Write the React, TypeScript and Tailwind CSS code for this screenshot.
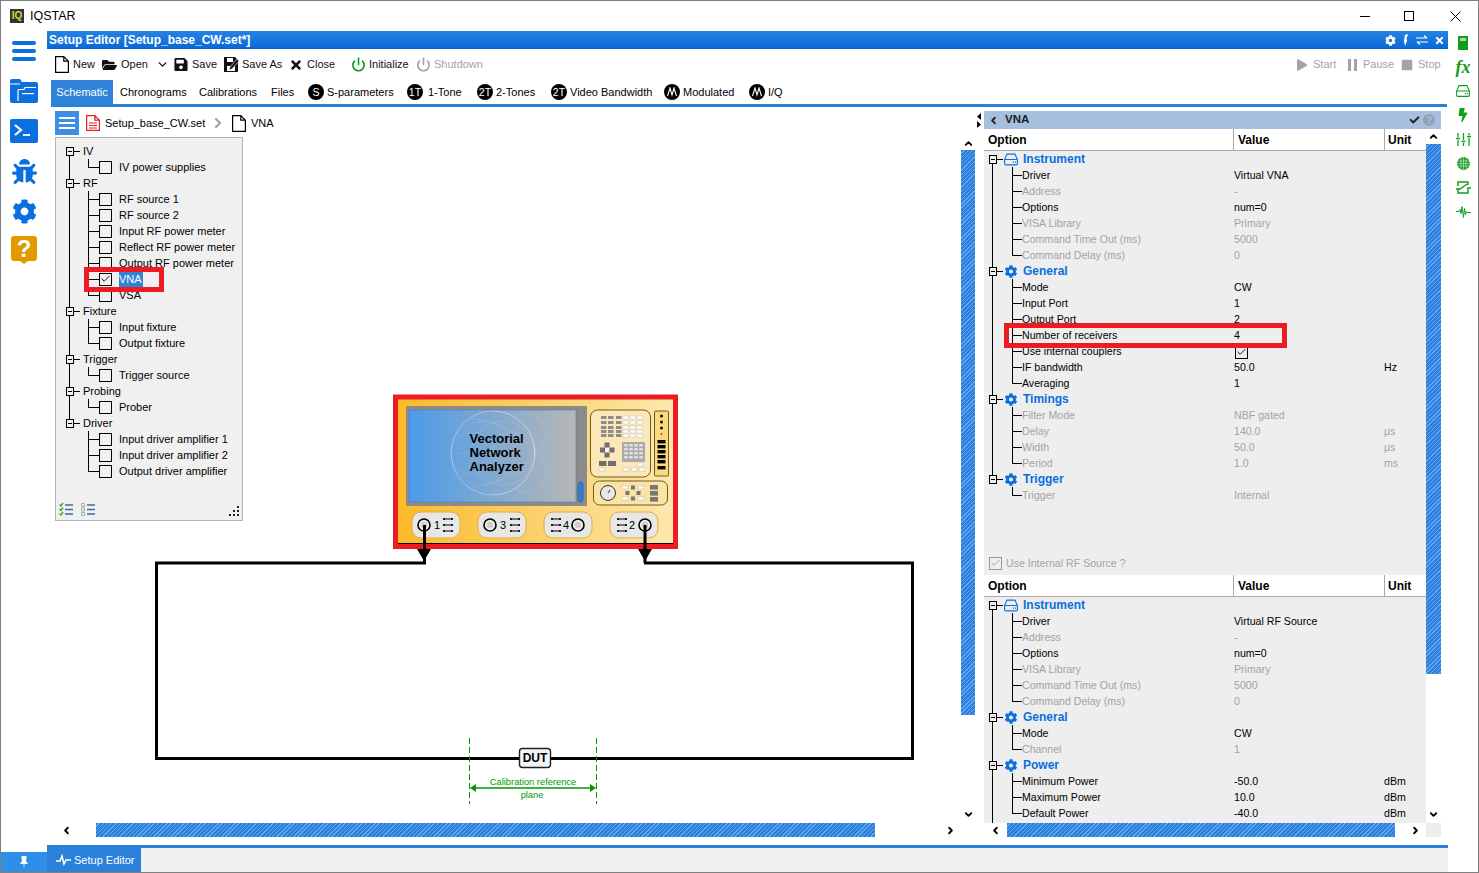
import { Check, ChevronDown, ChevronLeft, ChevronRight, ChevronUp, Power } from "lucide-react"
import { FaBug, FaCog, FaPlay, FaStop, FaBolt, FaSave, FaFolderOpen, FaTimes, FaCheck, FaQuestionCircle } from "react-icons/fa"

type Row = { label: string; value?: string; unit?: string; off?: boolean; check?: boolean }
type Group = { label: string; icon: "hdd" | "gear"; rows: Row[] }

const leftTree = [
  { label: "IV", items: ["IV power supplies"] },
  { label: "RF", items: ["RF source 1", "RF source 2", "Input RF power meter", "Reflect RF power meter", "Output RF power meter", "VNA", "VSA"] },
  { label: "Fixture", items: ["Input fixture", "Output fixture"] },
  { label: "Trigger", items: ["Trigger source"] },
  { label: "Probing", items: ["Prober"] },
  { label: "Driver", items: ["Input driver amplifier 1", "Input driver amplifier 2", "Output driver amplifier"] },
]

const vnaGroups: Group[] = [
  {
    label: "Instrument",
    icon: "hdd",
    rows: [
      { label: "Driver", value: "Virtual VNA" },
      { label: "Address", value: "-", off: true },
      { label: "Options", value: "num=0" },
      { label: "VISA Library", value: "Primary", off: true },
      { label: "Command Time Out (ms)", value: "5000", off: true },
      { label: "Command Delay (ms)", value: "0", off: true },
    ],
  },
  {
    label: "General",
    icon: "gear",
    rows: [
      { label: "Mode", value: "CW" },
      { label: "Input Port", value: "1" },
      { label: "Output Port", value: "2" },
      { label: "Number of receivers", value: "4" },
      { label: "Use internal couplers", check: true },
      { label: "IF bandwidth", value: "50.0", unit: "Hz" },
      { label: "Averaging", value: "1" },
    ],
  },
  {
    label: "Timings",
    icon: "gear",
    rows: [
      { label: "Filter Mode", value: "NBF gated", off: true },
      { label: "Delay", value: "140.0", unit: "µs", off: true },
      { label: "Width", value: "50.0", unit: "µs", off: true },
      { label: "Period", value: "1.0", unit: "ms", off: true },
    ],
  },
  { label: "Trigger", icon: "gear", rows: [{ label: "Trigger", value: "Internal", off: true }] },
]

const sourceGroups: Group[] = [
  {
    label: "Instrument",
    icon: "hdd",
    rows: [
      { label: "Driver", value: "Virtual RF Source" },
      { label: "Address", value: "-", off: true },
      { label: "Options", value: "num=0" },
      { label: "VISA Library", value: "Primary", off: true },
      { label: "Command Time Out (ms)", value: "5000", off: true },
      { label: "Command Delay (ms)", value: "0", off: true },
    ],
  },
  {
    label: "General",
    icon: "gear",
    rows: [
      { label: "Mode", value: "CW" },
      { label: "Channel", value: "1", off: true },
    ],
  },
  {
    label: "Power",
    icon: "gear",
    rows: [
      { label: "Minimum Power", value: "-50.0", unit: "dBm" },
      { label: "Maximum Power", value: "10.0", unit: "dBm" },
      { label: "Default Power", value: "-40.0", unit: "dBm" },
    ],
  },
]

const tabs = [
  { label: "Chronograms", cls: "ml-[7px] w-[79px]" },
  { label: "Calibrations", cls: "w-[72px]" },
  { label: "Files", cls: "w-[37px]" },
  { label: "S-parameters", badge: "S", cls: "w-[99px]" },
  { label: "1-Tone", badge: "1T", cls: "w-[70px]" },
  { label: "2-Tones", badge: "2T", cls: "w-[74px]" },
  { label: "Video Bandwidth", badge: "2T", cls: "w-[113px]" },
  { label: "Modulated", wave: true, cls: "w-[85px]" },
  { label: "I/Q", wave: true, cls: "w-[50px]" },
]

const hatch = "bg-[repeating-linear-gradient(135deg,#2a80dc_0px,#2a80dc_2px,#63a8ee_2px,#63a8ee_3px)]"

function TreeBranch({ width, branchX, mainX, more, lastChild }: { width: number; branchX: number; mainX: number; more: boolean; lastChild: boolean }) {
  return (
    <svg width={width} height={16} shapeRendering="crispEdges" className="shrink-0">
      {more && <path d={`M${mainX} 0V16`} stroke="#000" />}
      <path d={`M${branchX} 0V${lastChild ? 8.5 : 16}M${branchX} 8.5H${width}`} stroke="#000" fill="none" />
    </svg>
  )
}

function TreeNode({ width, lineEnd, mainX, first, more }: { width: number; lineEnd: number; mainX: number; first: boolean; more: boolean }) {
  const l = mainX - 3.5
  return (
    <svg width={width} height={16} shapeRendering="crispEdges" className="shrink-0">
      {!first && <path d={`M${mainX} 0V4.5`} stroke="#000" />}
      {more && <path d={`M${mainX} 12.5V16`} stroke="#000" />}
      <rect x={l} y={4.5} width={7} height={8} fill="none" stroke="#000" />
      <path d={`M${l + 2} 8.5H${l + 6}M${l + 7} 8.5H${lineEnd}`} stroke="#000" />
    </svg>
  )
}

function Box({ checked, off }: { checked?: boolean; off?: boolean }) {
  return (
    <span className={`flex h-[13px] w-[13px] shrink-0 items-center justify-center border ${off ? "border-[#999] text-[#999]" : "border-black text-black"}`}>
      {checked && <Check size={12} strokeWidth={2} />}
    </span>
  )
}

function HddIcon({ className }: { className: string }) {
  return (
    <svg viewBox="0 0 14 12" className={className} fill="none" stroke="currentColor" strokeWidth="1.1">
      <path d="M3 .6h8l2.4 5.4v4a1.4 1.4 0 0 1-1.4 1.4H2A1.4 1.4 0 0 1 .6 10V6zM.6 6h12.8" />
      <path d="M9 8.7h1.2M11 8.7h1" strokeWidth="1.2" />
    </svg>
  )
}

function OptionTable({ groups, clipped }: { groups: Group[]; clipped?: boolean }) {
  return (
    <div className="flex min-h-0 flex-1 flex-col">
      <div className="flex h-[22px] shrink-0 items-center border-b border-[#a9a9a9] bg-white text-[12px] font-bold text-black">
        <div className="flex h-full w-[250px] items-center border-r border-[#a9a9a9] pl-[4px]">Option</div>
        <div className="flex h-full w-[151px] items-center border-r border-[#a9a9a9] pl-[4px]">Value</div>
        <div className="pl-[3px]">Unit</div>
      </div>
      <div className="min-h-0 flex-1 overflow-hidden">
        {groups.map((group, g) => {
          const more = clipped || g < groups.length - 1
          return (
            <div key={group.label}>
              <div className="flex h-[16px] items-center">
                <TreeNode width={20} lineEnd={19} mainX={8.5} first={g === 0} more={more} />
                {group.icon === "hdd" ? (
                  <HddIcon className="h-[13px] w-[14px] text-[#0b6fe0]" />
                ) : (
                  <FaCog className="h-[13px] w-[14px] text-[#0b6fe0]" />
                )}
                <span className="ml-[5px] text-[12px] font-bold text-[#0b6fe0]">{group.label}</span>
              </div>
              {group.rows.map((row, r) => (
                <div key={row.label} className={`flex h-[16px] items-center text-[10.6px] ${row.off ? "text-[#a3a3a3]" : "text-black"}`}>
                  <div className="flex w-[250px] items-center whitespace-nowrap">
                    <TreeBranch width={38} mainX={8.5} branchX={28.5} more={more} lastChild={r === group.rows.length - 1} />
                    <span>{row.label}</span>
                  </div>
                  <div className="flex w-[150px] items-center whitespace-nowrap">
                    {row.check ? (
                      <span className="ml-[1px] mt-[2px]">
                        <Box checked />
                      </span>
                    ) : (
                      row.value
                    )}
                  </div>
                  <div>{row.unit}</div>
                </div>
              ))}
            </div>
          )
        })}
        {clipped && <TreeBranch width={38} mainX={8.5} branchX={-5} more lastChild />}
      </div>
    </div>
  )
}

function Badge({ text, wave }: { text?: string; wave?: boolean }) {
  return (
    <span className={`flex h-[16px] w-[16px] shrink-0 items-center justify-center rounded-full bg-black text-[10.5px] text-white ${text === "1T" ? "mr-[5px]" : "mr-[3px]"}`}>
      {wave ? (
        <svg width="10" height="10" viewBox="0 0 10 10" fill="none" stroke="#fff" strokeWidth="1.1">
          <path d="M.5 9L3 1l2 7 2-7 2.5 8" />
        </svg>
      ) : (
        text
      )}
    </span>
  )
}

function ToolIcon({ kind }: { kind: string }) {
  if (kind === "new")
    return (
      <svg width="14" height="17" viewBox="0 0 14 17" fill="none" stroke="#000" strokeWidth="1.2" className="shrink-0">
        <path d="M.6.6h8.2l4.6 4.6v11.2H.6zM8.8.6v4.6h4.6" />
      </svg>
    )
  if (kind === "saveas")
    return (
      <svg width="15" height="15" viewBox="0 0 15 15" className="shrink-0">
        <path d="M0 0h11l3 3v11a1 1 0 0 1-1 1H0z" fill="#111" />
        <path d="M3 1h6v4H3zM3 9h8v5H3z" fill="#fff" />
        <path d="M5 13l1-3 7-8 2 2-7 8z" fill="#111" stroke="#fff" strokeWidth=".6" />
      </svg>
    )
  return null
}

function Sidebar() {
  return (
    <div className="flex w-[46px] shrink-0 flex-col items-center text-[#0b6fe0]">
      <div className="flex h-[40px] items-center justify-center">
        <div className="flex w-[24px] flex-col gap-[4px]">
          <div className="h-[4px] rounded-full bg-[#0b6fe0]" />
          <div className="h-[4px] rounded-full bg-[#0b6fe0]" />
          <div className="h-[4px] rounded-full bg-[#0b6fe0]" />
        </div>
      </div>
      <div className="flex h-[40px] items-center justify-center">
        <svg width="28" height="24" viewBox="0 0 28 24">
          <path d="M2 0h8l2 3h14a2 2 0 0 1 2 2v17a2 2 0 0 1-2 2H2a2 2 0 0 1-2-2V2a2 2 0 0 1 2-2z" fill="#0b6fe0" />
          <path d="M0 5h10M8 22V11.500a1 1 0 0 1 1-1h5l1-2h11" fill="none" stroke="#fff" strokeWidth="1.2" />
          <path d="M12 14h12v1.200H12z" fill="#fff" />
        </svg>
      </div>
      <div className="flex h-[40px] items-center justify-center">
        <svg width="28" height="24" viewBox="0 0 28 24">
          <rect width="28" height="24" rx="2" fill="#0b6fe0" />
          <path d="M5 6l6 5-6 5" fill="none" stroke="#fff" strokeWidth="2.2" />
          <path d="M13 16h7" stroke="#fff" strokeWidth="2" />
        </svg>
      </div>
      <div className="flex h-[40px] items-center justify-center">
        <FaBug className="h-[25px] w-[25px]" />
      </div>
      <div className="flex h-[40px] items-center justify-center">
        <FaCog className="h-[25px] w-[25px]" />
      </div>
      <div className="flex h-[38px] flex-col items-center justify-center">
        <div className="flex h-[25px] w-[26px] items-center justify-center rounded-[3px] bg-[#e09a00] text-[24px] font-bold text-white">?</div>
        <svg width="8" height="3" viewBox="0 0 8 3" fill="#e09a00">
          <path d="M0 0h8L4 3z" />
        </svg>
      </div>
    </div>
  )
}

function RightBar() {
  return (
    <div className="flex w-[30px] shrink-0 flex-col items-center text-[#0f9d1c]">
      <div className="flex h-[24px] items-center">
        <svg width="10" height="14" viewBox="0 0 10 14">
          <rect width="10" height="14" fill="#0f9d1c" />
          <rect x="2" y="2" width="6" height="3" fill="#a6dca6" />
        </svg>
      </div>
      <div className="flex h-[24px] items-center font-['Liberation_Serif',serif] text-[18px] font-bold italic leading-none">fx</div>
      <div className="flex h-[24px] items-center">
        <HddIcon className="h-[12px] w-[14px]" />
      </div>
      <div className="flex h-[24px] items-center">
        <FaBolt className="h-[14px] w-[12px]" />
      </div>
      <div className="flex h-[24px] items-center">
        <svg width="15" height="13" viewBox="0 0 15 13" fill="none" stroke="currentColor" strokeWidth="1.3">
          <path d="M2 0v4M2 7v6M7.500 0v7M7.500 10v3M13 0v2M13 5v8M0 5.500h4M5.500 8.500h4M11 3.500h4" />
        </svg>
      </div>
      <div className="flex h-[24px] items-center">
        <svg width="13" height="13" viewBox="0 0 13 13">
          <circle cx="6.5" cy="6.5" r="6.5" fill="currentColor" />
          <path d="M4 0v13M6.500 0v13M9 0v13M0 4h13M0 6.500h13M0 9h13" stroke="#fff" strokeWidth=".5" />
        </svg>
      </div>
      <div className="flex h-[24px] items-center">
        <svg width="15" height="13" viewBox="0 0 15 13" fill="none" stroke="currentColor" strokeWidth="1.4">
          <path d="M2 5V1h10v3M12 8v4H2V8M0 8h4l7-5M11 7h4" />
        </svg>
      </div>
      <div className="flex h-[24px] items-center">
        <svg width="15" height="13" viewBox="0 0 15 13" fill="none" stroke="currentColor" strokeWidth="1">
          <path d="M0 6.500h3l1-2 1 4 1-7 1.500 11 1-9 1 6 1-3 .8 1H15" />
        </svg>
      </div>
    </div>
  )
}

function Smith() {
  const cx = 493
  const cy = 453
  return (
    <g fill="none" stroke="#fff" strokeOpacity=".2" strokeWidth=".5">
      <circle cx={cx} cy={cy} r={42} strokeOpacity=".4" strokeWidth=".8" />
      <circle cx={cx + 10} cy={cy} r={32} />
      <circle cx={cx + 21} cy={cy} r={21} />
      <circle cx={cx + 31} cy={cy} r={11} />
      <circle cx={cx - 10} cy={cy} r={32} />
      <circle cx={cx - 21} cy={cy} r={21} />
      <path d={`M${cx - 42} ${cy}H${cx + 42}`} />
      <path d={`M${cx + 42} ${cy}A42 42 0 0 0 ${cx} ${cy - 42}M${cx + 42} ${cy}A42 42 0 0 1 ${cx} ${cy + 42}`} />
      <path d={`M${cx + 42} ${cy}A84 84 0 0 0 ${cx - 25} ${cy - 34}M${cx + 42} ${cy}A84 84 0 0 1 ${cx - 25} ${cy + 34}`} />
      <path d={`M${cx + 42} ${cy}A21 21 0 0 0 ${cx + 22} ${cy - 37}M${cx + 42} ${cy}A21 21 0 0 1 ${cx + 22} ${cy + 37}`} />
    </g>
  )
}

function Pill({ x, port, num, numX, linesX }: { x: number; port: number; num: string; numX: number; linesX: number }) {
  return (
    <g>
      <rect x={x} y={512} width={48} height={26} rx={9} fill="#e7e7e7" stroke="#e0ad45" />
      <circle cx={port} cy={525} r={6} fill="#f2f2ea" stroke="#000" strokeWidth="1.6" />
      <circle cx={port} cy={525} r={3.4} fill="#cfcfcf" />
      <text x={numX} y={529} fontSize="11" fontFamily="Liberation Sans, sans-serif" textAnchor="middle" fill="#000">
        {num}
      </text>
      {[519, 525, 531].map((y) => (
        <g key={y}>
          <path d={`M${linesX} ${y}h10`} stroke="#000" strokeWidth="1" />
          <circle cx={linesX + 1} cy={y} r={1} fill="#000" />
          <circle cx={linesX + 9} cy={y} r={1} fill="#000" />
        </g>
      ))}
    </g>
  )
}

function Schematic() {
  const keyXs = [601, 608, 616, 623, 630, 637]
  const keyYs = [416, 421, 426, 430, 434]
  return (
    <svg viewBox="47 107 914 716" className="absolute left-0 top-0 h-[716px] w-[914px]">
      <defs>
        <linearGradient id="body" x1="0" x2="1" y1="0" y2="0">
          <stop offset="0" stopColor="#fbb926" />
          <stop offset="1" stopColor="#fde8ae" />
        </linearGradient>
        <linearGradient id="screen" x1="0" x2="1" y1="0" y2="0">
          <stop offset="0" stopColor="#4a9bea" />
          <stop offset="1" stopColor="#b7b7b7" />
        </linearGradient>
      </defs>
      <rect x="395.5" y="397" width="280" height="149.5" fill="url(#body)" stroke="#ed1c24" strokeWidth="5" />
      <rect x="406" y="406" width="181" height="100" fill="#8b8b8b" />
      <rect x="409" y="410" width="167" height="92" fill="url(#screen)" stroke="#5f7f9e" strokeWidth=".6" />
      <Smith />
      <rect x="578" y="482" width="5" height="20" rx="2.5" fill="#2f7fd8" stroke="#24548c" strokeWidth=".6" />
      <g fontFamily="Liberation Sans, sans-serif" fontWeight="700" fontSize="13" fill="#000">
        <text x="469.5" y="443">Vectorial</text>
        <text x="469.5" y="457">Network</text>
        <text x="469.5" y="471">Analyzer</text>
      </g>

      <rect x="590.5" y="410" width="60" height="67" rx="7" fill="#fbe7b8" stroke="#6b5a2a" />
      {keyYs.map((y) =>
        keyXs.map((x, i) => <rect key={`${x}${y}`} x={x} y={y} width="5.5" height="3" fill={i < 3 ? "#8d8d8d" : "#fff"} stroke={i < 3 ? "none" : "#b9b9b9"} strokeWidth=".4" />),
      )}
      <g fill="#6f6f6f">
        <rect x="604.5" y="442.5" width="5" height="5" />
        <rect x="604.5" y="452.5" width="5" height="5" />
        <rect x="600" y="447.5" width="5" height="5" />
        <rect x="609.5" y="447.5" width="5" height="5" />
      </g>
      <rect x="605.5" y="448.5" width="3" height="3" fill="#fff" />
      <rect x="622" y="442" width="23" height="20" rx="1" fill="#a9a9a9" />
      {[444, 448, 452, 456].map((y) =>
        [624, 629, 634, 639].map((x) => <rect key={`${x}n${y}`} x={x} y={y} width="4" height="2.6" rx="1" fill="#dfdfdf" />),
      )}
      <rect x="599" y="461" width="7.5" height="5" fill="#6f6f6f" />
      <rect x="608" y="461" width="8" height="5" fill="#6f6f6f" />
      {[[599, 468, 6], [623, 468, 6], [631, 468, 6], [639, 468, 6], [637, 463, 6]].map(([x, y, w]) => (
        <rect key={`${x}b${y}`} x={x} y={y} width={w} height="3" fill="#fff" stroke="#aaa" strokeWidth=".4" />
      ))}

      <rect x="654.5" y="411" width="14" height="65" rx="1" fill="#fbd97c" stroke="#6b5a2a" />
      {[416, 422, 428, 434].map((y) => (
        <circle key={y} cx="661.5" cy={y} r={y === 434 ? 0.8 : 1.5} fill="#111" />
      ))}
      {[440, 445, 450, 455, 460, 466].map((y) => (
        <rect key={y} x="657.5" y={y} width="8" height="3.4" fill="#000" />
      ))}

      <rect x="593.5" y="481" width="74" height="24" rx="6" fill="#fbe3a4" stroke="#6b5a2a" />
      <circle cx="608" cy="493" r="7.5" fill="#e8e8e8" stroke="#333" />
      <path d="M610 490l-2 3" stroke="#333" />
      <g fill="#777">
        <rect x="631" y="485.5" width="4" height="4" />
        <rect x="631" y="496.5" width="4" height="4" />
        <rect x="625.5" y="491" width="4" height="4" />
        <rect x="636.5" y="491" width="4" height="4" />
      </g>
      {[[622, 486], [638, 486], [622, 497], [638, 497]].map(([x, y]) => (
        <rect key={`${x}c${y}`} x={x} y={y} width="6" height="3" fill="#fff" stroke="#aaa" strokeWidth=".4" />
      ))}
      {[485, 491, 497].map((y) => (
        <rect key={y} x="650" y={y} width="8" height="4.6" fill="#777" />
      ))}

      <Pill x={412} port={424} num="1" numX={437} linesX={443} />
      <Pill x={478} port={490} num="3" numX={503} linesX={510} />
      <Pill x={544} port={578} num="4" numX={566} linesX={551} />
      <Pill x={610} port={645} num="2" numX={632} linesX={617} />

      <path d="M398 543.5H673" stroke="#000" strokeWidth="1" />
      <path d="M417 549h14l-7 12zM638 549h14l-7 12z" fill="#000" />
      <path d="M424.5 525V563M645 525V563" stroke="#000" strokeWidth="3" fill="none" />
      <path d="M426 563H156.5V758.5H912.5V563H644" stroke="#000" strokeWidth="3" fill="none" />

      <path d="M469.5 738V804M596.5 738V804" stroke="#009900" strokeDasharray="6 3" fill="none" />
      <rect x="519.5" y="748.5" width="31" height="19" rx="3" fill="#f4f4f4" stroke="#222" strokeWidth="1.4" />
      <text x="535" y="762" fontFamily="Liberation Sans, sans-serif" fontWeight="700" fontSize="12" textAnchor="middle" fill="#000">
        DUT
      </text>
      <path d="M472 788H594" stroke="#009900" strokeWidth="1.4" />
      <path d="M470 788l6-4v8zM596 788l-6-4v8z" fill="#009900" />
      <g fontFamily="Liberation Sans, sans-serif" fontSize="9.3" textAnchor="middle" fill="#009900">
        <text x="533" y="785">Calibration reference</text>
        <text x="532" y="798">plane</text>
      </g>
    </svg>
  )
}

function LeftTree() {
  return (
    <div className="relative z-10 flex h-[384px] w-[188px] flex-col justify-between border border-[#b4b4b4] bg-[#f0f0f0] pb-[3px] pt-[5px]">
      <div>
        {leftTree.map((group, g) => {
          const more = g < leftTree.length - 1
          return (
            <div key={group.label}>
              <div className="flex h-[16px] items-center">
                <TreeNode width={27} lineEnd={24} mainX={13.5} first={g === 0} more={more} />
                <span>{group.label}</span>
              </div>
              {group.items.map((item, i) => (
                <div key={item} className="flex h-[16px] items-center whitespace-nowrap">
                  <TreeBranch width={43} mainX={13.5} branchX={32.5} more={more} lastChild={i === group.items.length - 1} />
                  <Box checked={item === "VNA"} />
                  {item === "VNA" ? (
                    <span className="ml-[7px] flex h-[16px] w-[24px] items-center bg-[#2f84d9] text-white">{item}</span>
                  ) : (
                    <span className="ml-[7px]">{item}</span>
                  )}
                </div>
              ))}
            </div>
          )
        })}
      </div>
      <div className="flex items-end justify-between pl-[3px] pr-[2px]">
        <div className="flex gap-[8px]">
          <svg width="14" height="15" viewBox="0 0 14 15">
            <path d="M6 3h8M6 7.500h8M6 12h8" stroke="#3c6aa8" strokeWidth="1.6" />
            <path d="M.5 2.500l1.500 1.500 2-3M.5 7l1.500 1.500 2-3M.5 11.500l1.500 1.500 2-3" stroke="#4aa02c" strokeWidth="1.4" fill="none" />
          </svg>
          <svg width="14" height="15" viewBox="0 0 14 15">
            <path d="M6 3h8M6 7.500h8M6 12h8" stroke="#3c6aa8" strokeWidth="1.6" />
            <path d="M.5 1.500h3v3h-3zM.5 6h3v3h-3zM.5 10.500h3v3h-3z" stroke="#aaa" fill="none" />
          </svg>
        </div>
        <svg width="11" height="11" viewBox="0 0 11 11" fill="#222">
          <path d="M8 0h2v2H8zM4 4h2v2H4zM8 4h2v2H8zM0 8h2v2H0zM4 8h2v2H4zM8 8h2v2H8z" />
        </svg>
      </div>
      <div className="absolute left-[28px] top-[129px] h-[25px] w-[80px] border-[5px] border-[#ed1c24]" />
    </div>
  )
}

export default function App() {
  return (
    <div className="flex h-[873px] w-[1479px] flex-col overflow-hidden border-b border-l border-r border-t border-[#808080] bg-white font-['Liberation_Sans',sans-serif] text-[11px] leading-none text-black">
      <div className="flex h-[30px] shrink-0 items-center">
        <div className="ml-[9px] flex h-[14px] w-[14px] items-center justify-center bg-[#333] text-[10px] font-bold text-[#c6e23a]">IQ</div>
        <span className="ml-[6px] text-[12.5px]">IQSTAR</span>
        <div className="ml-auto flex items-center">
          <div className="mr-[34px] h-px w-[10px] bg-black" />
          <div className="mr-[36px] h-[10px] w-[10px] border border-black" />
          <svg width="11" height="11" viewBox="0 0 11 11" stroke="#000" className="mr-[17px]">
            <path d="M.5.5l10 10M10.500.5l-10 10" />
          </svg>
        </div>
      </div>

      <div className="flex min-h-0 flex-1">
        <Sidebar />
        <div className="flex w-[1401px] shrink-0 flex-col">
          <div className="flex h-[18px] shrink-0 items-center justify-between bg-gradient-to-b from-[#2583e4] to-[#0868d6] pl-[2px] pr-[3px] text-[12px] font-bold text-white">
            <span>Setup Editor [Setup_base_CW.set*]</span>
            <div className="flex items-center gap-[6px]">
              <FaCog className="h-[11px] w-[11px]" />
              <svg width="8" height="12" viewBox="0 0 8 12" fill="#fff">
                <path d="M3 1c1-1 3-1 3 0L4.500 4 5 7 3 12 2 7z" />
              </svg>
              <svg width="12" height="10" viewBox="0 0 12 10" fill="none" stroke="#fff" strokeWidth="1.2">
                <path d="M0 3h11M8 .5L11 3M12 7H1M4 9.500L1 7" />
              </svg>
              <FaTimes className="h-[11px] w-[11px]" />
            </div>
          </div>

          <div className="flex h-[31px] shrink-0 items-center pl-[8px] pr-[7px] text-[#111]">
            <div className="flex w-[47px] items-center gap-[4px]"><ToolIcon kind="new" />New</div>
            <div className="flex w-[54px] items-center gap-[4px]"><FaFolderOpen className="h-[14px] w-[15px]" />Open</div>
            <div className="flex w-[18px] items-center"><ChevronDown size={13} strokeWidth={2.5} /></div>
            <div className="flex w-[50px] items-center gap-[4px]"><FaSave className="h-[15px] w-[14px]" />Save</div>
            <div className="flex w-[66px] items-center gap-[3px]"><ToolIcon kind="saveas" />Save As</div>
            <div className="flex w-[61px] items-center gap-[5px]"><FaTimes className="h-[14px] w-[12px]" />Close</div>
            <div className="flex w-[65px] items-center gap-[3px]"><Power size={15} strokeWidth={2.6} className="text-[#0f9d1c]" />Initialize</div>
            <div className="flex items-center gap-[3px] text-[#a3a3a3]"><Power size={15} strokeWidth={2.6} />Shutdown</div>
            <div className="ml-auto flex items-center text-[#a3a3a3]">
              <FaPlay className="mr-[6px] h-[12px] w-[10px]" />
              <span className="w-[35px]">Start</span>
              <div className="mr-[6px] flex h-[12px] gap-[3px]">
                <div className="w-[3px] bg-[#a3a3a3]" />
                <div className="w-[3px] bg-[#a3a3a3]" />
              </div>
              <span className="w-[38px]">Pause</span>
              <FaStop className="mr-[5px] h-[12px] w-[12px]" />
              <span className="w-[23px]">Stop</span>
            </div>
          </div>

          <div className="ml-[4px] mr-[1px] flex h-[27px] shrink-0 items-center border-b-[3px] border-[#2b80d9]">
            <div className="flex h-full w-[62px] items-center justify-center bg-[#2f84d9] text-white">Schematic</div>
            {tabs.map((tab) => (
              <div key={tab.label} className={`flex items-center whitespace-nowrap ${tab.cls}`}>
                {tab.badge && <Badge text={tab.badge} />}
                {tab.wave && <Badge wave />}
                {tab.label}
              </div>
            ))}
          </div>

          <div className="flex min-h-0 flex-1">
            <div className="flex w-[929px] shrink-0 flex-col pb-[8px]">
              <div className="flex min-h-0 flex-1">
                <div className="relative w-[914px] shrink-0 pl-[8px] pt-[4px]">
                  <Schematic />
                  <div className="relative z-10 flex h-[24px] items-center">
                    <div className="flex h-[24px] w-[24px] flex-col items-center justify-center gap-[3px] bg-[#3d8fe6]">
                      <div className="h-[2px] w-[16px] bg-white" />
                      <div className="h-[2px] w-[16px] bg-white" />
                      <div className="h-[2px] w-[16px] bg-white" />
                    </div>
                    <svg width="14" height="16" viewBox="0 0 14 16" fill="none" stroke="#e02020" strokeWidth="1.2" className="ml-[7px]">
                      <path d="M.6.6h8.200l4.600 4.600v10.200H.6zM8.800.6v4.600h4.600M3 8h8M3 10.500h8M3 13h8" />
                    </svg>
                    <span className="ml-[5px] w-[101px]">Setup_base_CW.set</span>
                    <ChevronRight size={16} strokeWidth={3.5} className="ml-[4px] text-[#a3a3a3]" />
                    <span className="ml-[6px] flex"><ToolIcon kind="new" /></span>
                    <span className="ml-[5px]">VNA</span>
                  </div>
                  <div className="mt-[2px]">
                    <LeftTree />
                  </div>
                </div>
                <div className="flex w-[14px] shrink-0 flex-col items-center pt-[30px]">
                  <div className="flex h-[13px] items-center"><ChevronUp size={11} strokeWidth={4} /></div>
                  <div className={`h-[565px] w-[14px] ${hatch}`} />
                  <div className="mb-[3px] mt-auto"><ChevronDown size={11} strokeWidth={4} /></div>
                </div>
              </div>
              <div className="flex h-[14px] shrink-0 items-center">
                <div className="ml-[14px] w-[35px]"><ChevronLeft size={11} strokeWidth={4} /></div>
                <div className={`h-[14px] w-[779px] ${hatch}`} />
                <div className="ml-[70px]"><ChevronRight size={11} strokeWidth={4} /></div>
              </div>
            </div>

            <div className="flex min-w-0 flex-1 pb-[8px] pl-[1px] pt-[4px]">
              <div className="flex w-[7px] shrink-0 flex-col items-start gap-[1px] pt-[2px]">
                <svg width="4" height="7" viewBox="0 0 4 7"><path d="M4 0v7L0 3.500z" /></svg>
                <svg width="4" height="7" viewBox="0 0 4 7"><path d="M0 0v7l4-3.500z" /></svg>
              </div>
              <div className="flex w-[457px] shrink-0 flex-col">
                <div className="flex h-[18px] shrink-0 items-center bg-[#a5bfdc] pl-[4px] pr-[6px] text-[11.5px] font-bold text-[#222]">
                  <ChevronLeft size={11} strokeWidth={4} />
                  <span className="ml-[6px]">VNA</span>
                  <FaCheck className="ml-auto h-[10px] w-[11px]" />
                  <FaQuestionCircle className="ml-[3px] h-[12px] w-[12px] text-[#8f9fb0]" />
                </div>
                <div className="flex min-h-0 flex-1">
                  <div className="relative flex w-[442px] shrink-0 flex-col bg-[#eeeeee]">
                    <div className="flex h-[426px] shrink-0 flex-col">
                      <OptionTable groups={vnaGroups} />
                    </div>
                    <div className="flex h-[20px] shrink-0 items-center gap-[4px] pb-[4px] pl-[5px] text-[10.6px] text-[#a3a3a3]">
                      <Box checked off />
                      Use Internal RF Source ?
                    </div>
                    <OptionTable groups={sourceGroups} clipped />
                    <div className="absolute left-[20px] top-[194px] h-[25px] w-[283px] border-[5px] border-[#ed1c24]" />
                  </div>
                  <div className="flex w-[15px] shrink-0 flex-col items-center">
                    <div className="flex h-[15px] items-center"><ChevronUp size={11} strokeWidth={4} /></div>
                    <div className={`h-[530px] w-[15px] ${hatch}`} />
                    <div className="mb-[3px] mt-auto"><ChevronDown size={11} strokeWidth={4} /></div>
                  </div>
                </div>
                <div className="flex h-[14px] shrink-0 items-center">
                  <div className="w-[23px] pl-[6px]"><ChevronLeft size={11} strokeWidth={4} /></div>
                  <div className={`h-[14px] w-[388px] ${hatch}`} />
                  <div className="ml-[15px] w-[16px]"><ChevronRight size={11} strokeWidth={4} /></div>
                  <div className="h-[14px] w-[15px] bg-[#eeeeee]" />
                </div>
              </div>
            </div>
          </div>
          <div className="h-[3px] shrink-0 bg-[#2b80d9]" />
        </div>
        <RightBar />
      </div>

      <div className="flex h-[24px] shrink-0">
        <div className="mt-[4px] flex h-[20px] w-[46px] items-center justify-center bg-[#2f8fe8]">
          <svg width="8" height="13" viewBox="0 0 8 13" fill="#fff">
            <path d="M1.500 0h5v1.500L6 5l2 3H4.500L4 13l-.5-5H0l2-3-.5-3.500z" />
          </svg>
        </div>
        <div className="flex w-[94px] items-center gap-[3px] whitespace-nowrap bg-[#2b80d9] pl-[9px] text-white">
          <svg width="15" height="12" viewBox="0 0 15 12" fill="none" stroke="#fff" strokeWidth="1.600">
            <path d="M0 7h4l2-5 2 8 2-4h5" />
          </svg>
          Setup Editor
        </div>
        <div className="w-[1307px] bg-[#f0f0f0]" />
      </div>
    </div>
  )
}
